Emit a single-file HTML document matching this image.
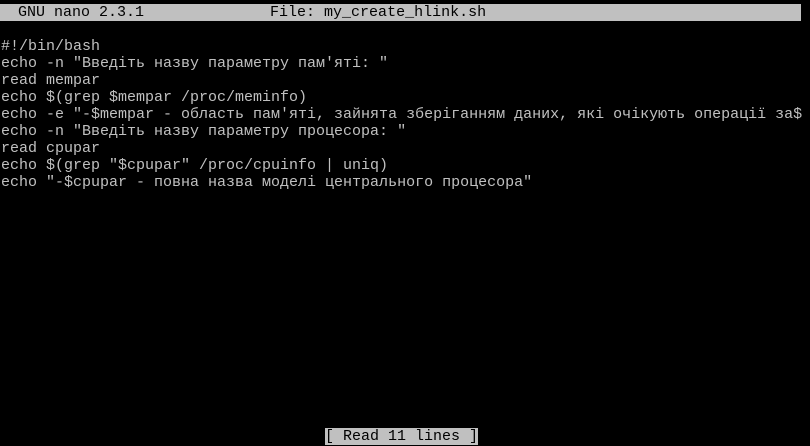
<!DOCTYPE html>
<html><head><meta charset="utf-8"><style>
html,body{margin:0;padding:0;background:#000;width:810px;height:446px;overflow:hidden}
.r{position:absolute;left:1px;height:17px;line-height:17px;font-family:"Liberation Mono","DejaVu Sans Mono",monospace;font-size:15px;color:#c0c0c0;white-space:pre;letter-spacing:0}
.t{background:#c0c0c0;color:#000;width:801px;left:0}
.s{background:#c0c0c0;color:#000;left:325px}
</style></head><body>
<div class="r t" style="top:4px">  GNU nano 2.3.1              File: my_create_hlink.sh</div>
<div class="r" style="top:38px">#!/bin/bash</div>
<div class="r" style="top:55px">echo -n "Введіть назву параметру пам'яті: "</div>
<div class="r" style="top:72px">read mempar</div>
<div class="r" style="top:89px">echo $(grep $mempar /proc/meminfo)</div>
<div class="r" style="top:106px">echo -e "-$mempar - область пам'яті, зайнята зберіганням даних, які очікують операції за$</div>
<div class="r" style="top:123px">echo -n "Введіть назву параметру процесора: "</div>
<div class="r" style="top:140px">read cpupar</div>
<div class="r" style="top:157px">echo $(grep "$cpupar" /proc/cpuinfo | uniq)</div>
<div class="r" style="top:174px">echo "-$cpupar - повна назва моделі центрального процесора"</div>
<div class="r s" style="top:428px">[ Read 11 lines ]</div>
</body></html>
